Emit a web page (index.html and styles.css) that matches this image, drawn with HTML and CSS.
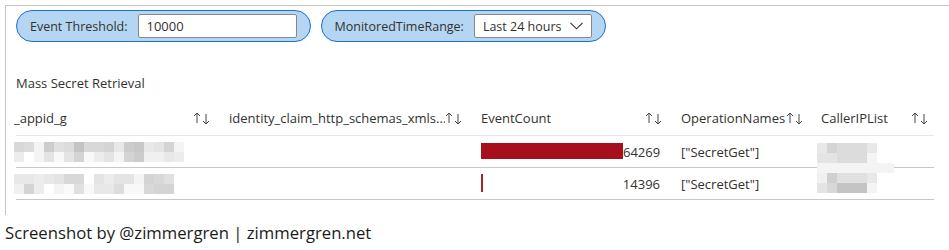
FILE: index.html
```html
<!DOCTYPE html>
<html>
<head>
<meta charset="utf-8">
<link rel="stylesheet" href="styles.css">
</head>
<body>
<div class="panel">
  <div class="params">
    <div class="pill">
      <span class="plabel">Event Threshold:</span>
      <div class="field">10000</div>
    </div>
    <div class="pill">
      <span class="plabel">MonitoredTimeRange:</span>
      <div class="field dropdown"><span>Last 24 hours</span>
        <svg class="chev" width="13" height="8" viewBox="0 0 13 8"><path d="M0.5 0.8 L6.5 6.8 L12.5 0.8" fill="none" stroke="#333" stroke-width="1.1"/></svg>
      </div>
    </div>
  </div>
  <div class="title">Mass Secret Retrieval</div>
  <div class="table">
    <div class="row head">
      <div class="cell c1"><span class="htext clip">_appid_g</span><svg class="sort" width="18" height="14" viewBox="0 0 18 14"><path d="M4 12V2M1 5l3-3 3 3M13 3v10M10 10l3 3 3-3" fill="none" stroke="#444" stroke-width="1"/></svg></div>
      <div class="cell c2"><span class="htext">identity_claim_http_schemas_xmls...</span><svg class="sort" width="18" height="14" viewBox="0 0 18 14"><path d="M4 12V2M1 5l3-3 3 3M13 3v10M10 10l3 3 3-3" fill="none" stroke="#444" stroke-width="1"/></svg></div>
      <div class="cell c3"><span class="htext">EventCount</span><svg class="sort" width="18" height="14" viewBox="0 0 18 14"><path d="M4 12V2M1 5l3-3 3 3M13 3v10M10 10l3 3 3-3" fill="none" stroke="#444" stroke-width="1"/></svg></div>
      <div class="cell c4"><span class="htext">OperationNames</span><svg class="sort tight" width="18" height="14" viewBox="0 0 18 14"><path d="M4 12V2M1 5l3-3 3 3M13 3v10M10 10l3 3 3-3" fill="none" stroke="#444" stroke-width="1"/></svg></div>
      <div class="cell c5"><span class="htext">CallerIPList</span><svg class="sort" width="18" height="14" viewBox="0 0 18 14"><path d="M4 12V2M1 5l3-3 3 3M13 3v10M10 10l3 3 3-3" fill="none" stroke="#444" stroke-width="1"/></svg></div>
    </div>
    <div class="row">
      <div class="cell c1">
        <div class="mosaic m17">
          <i style="background:#d8d8d8"></i><i style="background:#dcdcdc"></i><i style="background:#f4f4f4"></i><i style="background:#cccccc"></i><i style="background:#e0e0e0"></i><i style="background:#dcdcdc"></i><i style="background:#c4c4c4"></i><i style="background:#d8d8d8"></i><i style="background:#d8d8d8"></i><i style="background:#d4d4d4"></i><i style="background:#e8e8e8"></i><i style="background:#cccccc"></i><i style="background:#c8c8c8"></i><i style="background:#e8e8e8"></i><i style="background:#e4e4e4"></i><i style="background:#d4d4d4"></i><i style="background:#f4f4f4"></i>
          <i style="background:#ececec"></i><i style="background:#ffffff"></i><i style="background:#f4f4f4"></i><i style="background:#e4e4e4"></i><i style="background:#f8f8f8"></i><i style="background:#e4e4e4"></i><i style="background:#d4d4d4"></i><i style="background:#f8f8f8"></i><i style="background:#ececec"></i><i style="background:#e4e4e4"></i><i style="background:#f4f4f4"></i><i style="background:#d4d4d4"></i><i style="background:#cccccc"></i><i style="background:#f0f0f0"></i><i style="background:#f0f0f0"></i><i style="background:#e8e8e8"></i><i style="background:#ececec"></i>
        </div>
      </div>
      <div class="cell c2"></div>
      <div class="cell c3"><div class="bar" style="width:142px"></div><span class="num">64269</span></div>
      <div class="cell c4">["SecretGet"]</div>
      <div class="cell c5"></div>
    </div>
    <div class="row">
      <div class="cell c1">
        <div class="mosaic m16">
          <i style="background:#e8e8e8"></i><i style="background:#e8e8e8"></i><i style="background:#ececec"></i><i style="background:#e8e8e8"></i><i style="background:#e4e4e4"></i><i style="background:#d8d8d8"></i><i style="background:#d8d8d8"></i><i style="background:#ffffff"></i><i style="background:#e4e4e4"></i><i style="background:#ececec"></i><i style="background:#e4e4e4"></i><i style="background:#e4e4e4"></i><i style="background:#f4f4f4"></i><i style="background:#d4d4d4"></i><i style="background:#d8d8d8"></i><i style="background:#e0e0e0"></i>
          <i style="background:#f0f0f0"></i><i style="background:#d4d4d4"></i><i style="background:#ececec"></i><i style="background:#ffffff"></i><i style="background:#f4f4f4"></i><i style="background:#fafafa"></i><i style="background:#e0e0e0"></i><i style="background:#f8f8f8"></i><i style="background:#e8e8e8"></i><i style="background:#e8e8e8"></i><i style="background:#dcdcdc"></i><i style="background:#f8f8f8"></i><i style="background:#f8f8f8"></i><i style="background:#d8d8d8"></i><i style="background:#d4d4d4"></i><i style="background:#d4d4d4"></i>
        </div>
      </div>
      <div class="cell c2"></div>
      <div class="cell c3"><div class="bar thin" style="width:2px"></div><span class="num">14396</span></div>
      <div class="cell c4">["SecretGet"]</div>
      <div class="cell c5"></div>
    </div>
    <div class="redact">
      <div class="rline"><i style="background:#e8e8e8"></i><i style="background:#d4d4d4"></i><i class="w3" style="background:#dcdcdc"></i><i style="background:#e8e8e8"></i></div>
      <div class="rline"><i style="background:#e4e4e4"></i><i style="background:#e4e4e4"></i><i class="w3" style="background:#dcdcdc"></i><i style="background:#f4f4f4"></i></div>
      <div class="rline band"></div>
      <div class="rline"><i style="background:#f0f0f0"></i><i style="background:#d0d0d0"></i><i class="w3" style="background:#e0e0e0"></i><i style="background:#e8e8e8"></i></div>
      <div class="rline"><i style="background:#e4e4e4"></i><i style="background:#d8d8d8"></i><i class="w3" style="background:#c4c4c4"></i><i style="background:#f4f4f4"></i></div>
    </div>
  </div>
</div>
<div class="footer">Screenshot by @zimmergren | zimmergren.net</div>
</body>
</html>
```
FILE: styles.css
```css
* { box-sizing: border-box; }
html, body { margin: 0; padding: 0; background: #fff; }
body {
  font-family: "Open Sans", "Noto Sans", sans-serif;
  font-size: 13px;
  color: #323130;
}
.panel {
  margin: 5px 0 0 5px;
  height: 210px;
  border-top: 1px solid #c4c4c4;
  border-left: 1px solid #c4c4c4;
  padding: 4px 0 0 10px;
}
.params { display: flex; gap: 10px; }
.pill {
  display: flex;
  align-items: center;
  gap: 10px;
  height: 32px;
  padding: 0 13px;
  background: #b4d6f2;
  border: 1px solid #1a6fd6;
  border-radius: 16px;
}
.plabel { color: #323130; font-size: 12.5px; }
.field {
  width: 159px;
  height: 24px;
  background: #fff;
  border: 1px solid #8a8886;
  border-radius: 2px;
  padding: 0 8px;
  display: flex;
  align-items: center;
  color: #323130;
}
.dropdown { width: 118px; justify-content: space-between; padding-right: 8px; font-size: 12.5px; }
.title { margin-top: 31px; height: 20px; line-height: 20px; }
.table { position: relative; width: 918px; margin-top: 7px; }
.row { display: grid; grid-template-columns: 213px 252px 200px 140px 113px; height: 32px; border-bottom: 1px solid #c8c8c8; }
.row.head { height: 36px; border-bottom-color: #e6e6e6; }
.cell { display: flex; align-items: center; min-width: 0; white-space: nowrap; }
.head .cell { justify-content: space-between; padding-right: 18px; }
.head .cell.c5 { padding-right: 5px; }
.head .cell.c4 { padding-right: 17px; }
.htext { overflow: hidden; }
.clip { margin-left: -2px; }
.sort { flex: none; }
.mosaic { display: grid; grid-template-columns: repeat(17, 10px); grid-auto-rows: 10px; margin-left: -2px; margin-top: 1px; }
.mosaic.m16 { grid-template-columns: repeat(16, 10px); }
.mosaic i { display: block; }
.bar { height: 16px; background: #a80f1c; flex: none; margin-top: -1px; }
.bar.thin { height: 18px; background: #a4262c; }
.num { margin-left: auto; padding-right: 21px; }
.redact { position: absolute; left: 801px; top: 43px; width: 77px; }
.rline { display: flex; height: 10px; }
.rline i { display: block; width: 10px; height: 10px; }
.rline i.w3 { width: 30px; }
.rline.band { width: 77px; background: #f4f4f4; }
.footer {
  margin: 6px 0 0 5px;
  font-size: 16.7px;
  line-height: 24px;
  color: #1b1b1b;
}
```
